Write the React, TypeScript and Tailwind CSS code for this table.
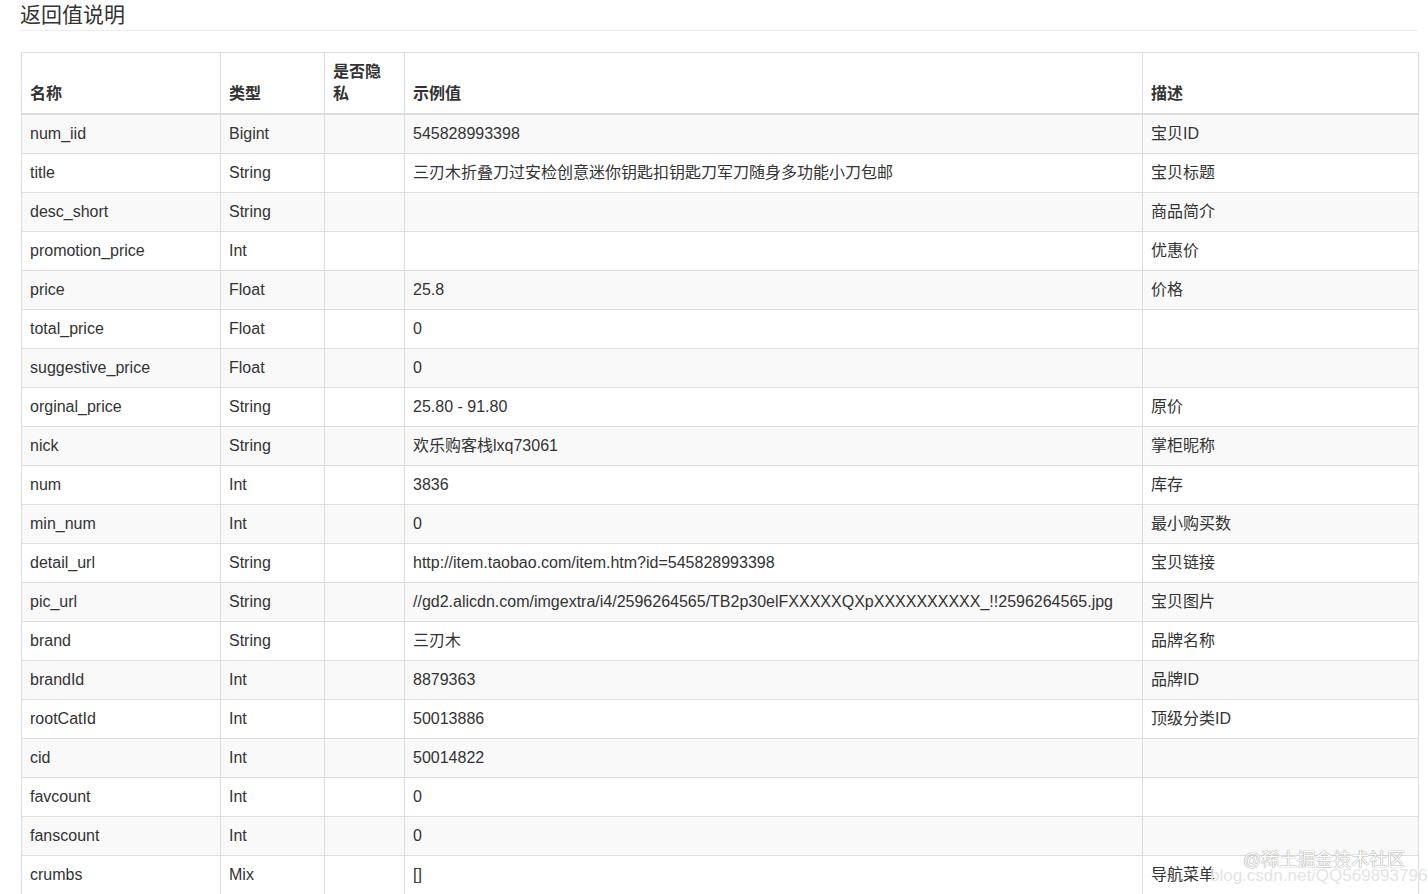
import React from 'react';

interface Row {
  name: string;
  type: string;
  example: string;
  desc: string;
}

const rows: Row[] = [
  { name: 'num_iid', type: 'Bigint', example: '545828993398', desc: '宝贝ID' },
  { name: 'title', type: 'String', example: '三刃木折叠刀过安检创意迷你钥匙扣钥匙刀军刀随身多功能小刀包邮', desc: '宝贝标题' },
  { name: 'desc_short', type: 'String', example: '', desc: '商品简介' },
  { name: 'promotion_price', type: 'Int', example: '', desc: '优惠价' },
  { name: 'price', type: 'Float', example: '25.8', desc: '价格' },
  { name: 'total_price', type: 'Float', example: '0', desc: '' },
  { name: 'suggestive_price', type: 'Float', example: '0', desc: '' },
  { name: 'orginal_price', type: 'String', example: '25.80 - 91.80', desc: '原价' },
  { name: 'nick', type: 'String', example: '欢乐购客栈lxq73061', desc: '掌柜昵称' },
  { name: 'num', type: 'Int', example: '3836', desc: '库存' },
  { name: 'min_num', type: 'Int', example: '0', desc: '最小购买数' },
  { name: 'detail_url', type: 'String', example: 'http://item.taobao.com/item.htm?id=545828993398', desc: '宝贝链接' },
  { name: 'pic_url', type: 'String', example: '//gd2.alicdn.com/imgextra/i4/2596264565/TB2p30elFXXXXXQXpXXXXXXXXXX_!!2596264565.jpg', desc: '宝贝图片' },
  { name: 'brand', type: 'String', example: '三刃木', desc: '品牌名称' },
  { name: 'brandId', type: 'Int', example: '8879363', desc: '品牌ID' },
  { name: 'rootCatId', type: 'Int', example: '50013886', desc: '顶级分类ID' },
  { name: 'cid', type: 'Int', example: '50014822', desc: '' },
  { name: 'favcount', type: 'Int', example: '0', desc: '' },
  { name: 'fanscount', type: 'Int', example: '0', desc: '' },
  { name: 'crumbs', type: 'Mix', example: '[]', desc: '导航菜单' },
];

const font = { fontFamily: '"Liberation Sans", "Noto Sans CJK SC", sans-serif' };

export default function App() {
  return (
    <div className="h-[894px] overflow-hidden bg-white text-[#333] relative" style={font}>
      <div className="ml-[20px] w-[1398px]">
        <h2 className="text-[21px] leading-[30px] font-normal border-b border-[#eee] h-[31px]">返回值说明</h2>

        <table className="mt-[21px] ml-px w-[1397px] table-fixed border-collapse text-[16px] leading-[22px]">
          <colgroup>
            <col className="w-[199px]" />
            <col className="w-[104px]" />
            <col className="w-[80px]" />
            <col className="w-[738px]" />
            <col className="w-[276px]" />
          </colgroup>
          <thead>
            <tr>
              <th className="border border-[#ddd] border-b-2 px-2 py-2 text-left align-bottom font-bold">名称</th>
              <th className="border border-[#ddd] border-b-2 px-2 py-2 text-left align-bottom font-bold">类型</th>
              <th className="border border-[#ddd] border-b-2 px-2 py-2 text-left align-bottom font-bold">
                <span className="block max-w-[52px]">是否隐私</span>
              </th>
              <th className="border border-[#ddd] border-b-2 px-2 py-2 text-left align-bottom font-bold">示例值</th>
              <th className="border border-[#ddd] border-b-2 px-2 py-2 text-left align-bottom font-bold">描述</th>
            </tr>
          </thead>
          <tbody>
            {rows.map((r, i) => (
              <tr key={r.name} className={i % 2 === 0 ? 'bg-[#f9f9f9]' : 'bg-white'}>
                <td className="border border-[#ddd] px-2 py-2 h-[39px] align-top">{r.name}</td>
                <td className="border border-[#ddd] px-2 py-2 align-top">{r.type}</td>
                <td className="border border-[#ddd] px-2 py-2 align-top"></td>
                <td className="border border-[#ddd] px-2 py-2 align-top whitespace-nowrap">{r.example}</td>
                <td className="border border-[#ddd] px-2 py-2 align-top">{r.desc}</td>
              </tr>
            ))}
          </tbody>
        </table>
      </div>

      <div className="absolute left-[1210px] top-[863px] text-[17px] text-[#e4e4e4] whitespace-nowrap">
        blog.csdn.net/QQ569893796
      </div>
      <div
        className="absolute left-[1243px] top-[847px] text-[18px] text-white whitespace-nowrap"
        style={{ textShadow: '0 0 1px #999, 0 0 1px #999' }}
      >
        @稀土掘金技术社区
      </div>
    </div>
  );
}
